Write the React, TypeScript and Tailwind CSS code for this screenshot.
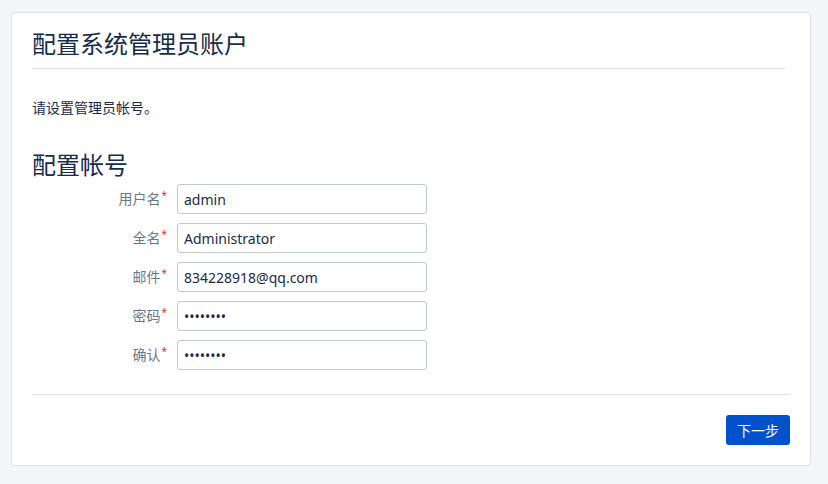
export default function App() {
  const fields = [
    { label: '用户名', value: 'admin', type: 'text' },
    { label: '全名', value: 'Administrator', type: 'text' },
    { label: '邮件', value: '834228918@qq.com', type: 'text' },
    { label: '密码', value: 'password', type: 'password' },
    { label: '确认', value: 'password', type: 'password' },
  ];

  return (
    <div
      className="min-h-[484px] bg-[#f4f5f7] pl-[11px] pt-[12px]"
      style={{ fontFamily: '"Noto Sans", "Noto Sans CJK SC", sans-serif' }}
    >
      <div className="w-[800px] h-[454px] bg-white border border-[#dfe1e6] rounded-[3px] pl-[20px] pr-[20px] flex flex-col">
        {/* Header */}
        <div className="mr-[5px] pt-[17px] pb-[10px] border-b border-[#dfe1e6]">
          <h1 className="text-[24px] leading-[28px] text-[#172b4d]">配置系统管理员账户</h1>
        </div>

        <p className="mt-[29px] text-[14px] leading-[20px] text-[#172b4d]">请设置管理员帐号。</p>

        <h2 className="mt-[32px] text-[24px] leading-[30px] text-[#172b4d]">配置帐号</h2>

        <div className="mt-[4px] flex flex-col gap-[9px]">
          {fields.map((f) => (
            <div key={f.label} className="flex items-center gap-[10px]">
              <label className="w-[135px] text-right text-[14px] leading-[20px] text-[#6b778c]">
                {f.label}
                <sup className="text-[#de350b] text-[10px] ml-[1px]">*</sup>
              </label>
              <input
                type={f.type}
                defaultValue={f.value}
                readOnly
                className="w-[250px] h-[30px] border border-[#c1c7d0] rounded-[3px] px-[6px] text-[14px] text-[#172b4d] outline-none"
              />
            </div>
          ))}
        </div>

        <div className="mt-[24px] border-t border-[#dfe1e6]" />

        <div className="mt-[20px] flex justify-end">
          <button className="w-[64px] h-[30px] bg-[#0052cc] rounded-[3px] text-white text-[14px]">
            下一步
          </button>
        </div>
      </div>
    </div>
  );
}
